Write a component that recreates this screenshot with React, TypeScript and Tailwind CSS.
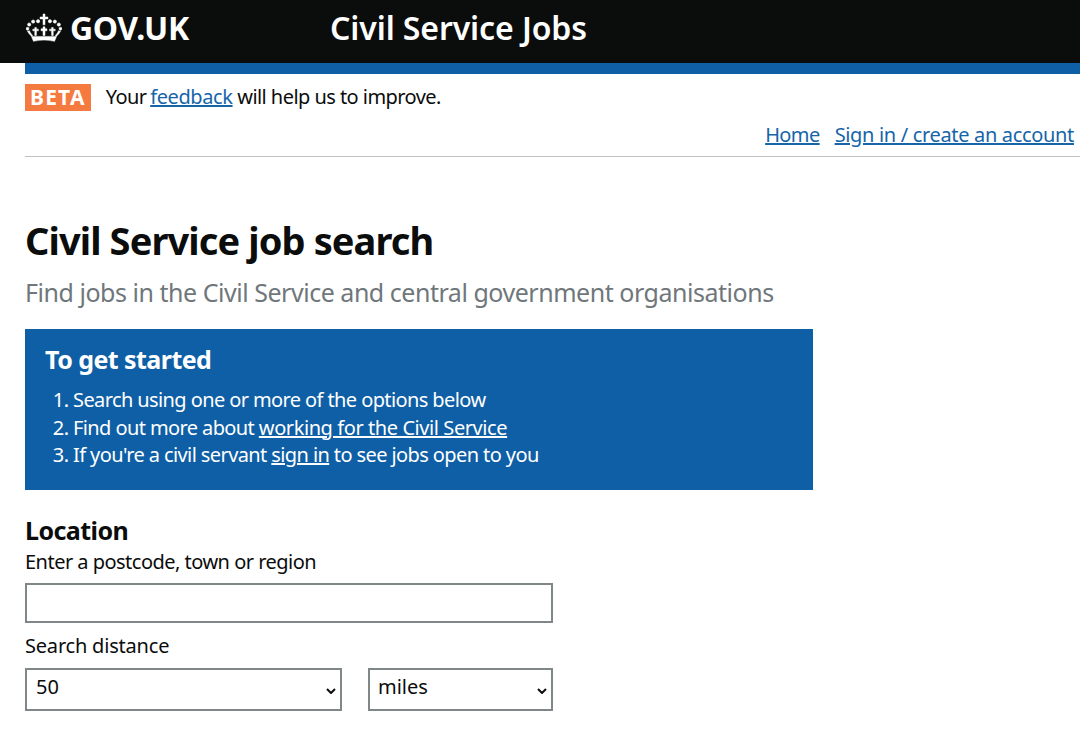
import React from "react"

function Crown() {
  return (
    <svg viewBox="18 12 108 88" className="w-[36px] h-[29px] fill-white stroke-white stroke-[1.5]">
      <path d="M69 15h6v9h9v6h-9v18h-6V30h-9v-6h9z" />
      <circle cx="54" cy="37" r="5" />
      <circle cx="90" cy="37" r="5" />
      <circle cx="39" cy="38" r="5" />
      <circle cx="105" cy="38" r="5" />
      <circle cx="27" cy="47" r="5" />
      <circle cx="117" cy="47" r="5" />
      <circle cx="22" cy="60" r="4.500" />
      <circle cx="122" cy="60" r="4.500" />
      {/* three small crosses */}
      <path d="M69 54h6v6h6v6h-6v14h-6V66h-6v-6h6z" />
      <path d="M44 56h5v5h6v5h-6v14h-5V66h-6v-5h6z" />
      <path d="M95 56h5v5h6v5h-6v14h-5V66h-6v-5h6z" />
      <path d="M22 67l6-1c2 6 5 10 9 13l-1 4c-6-4-11-9-14-16z" />
      <path d="M122 67l-6-1c-2 6-5 10-9 13l1 4c6-4 11-9 14-16z" />
      <path d="M34 83h76l-6 15c-22-5-42-5-64 0z" />
    </svg>
  )
}

function Chevron() {
  return (
    <svg viewBox="0 0 10 6" className="absolute right-[6px] top-[20px] w-[10px] h-[6px] pointer-events-none fill-none stroke-[#0b0c0c] stroke-2">
      <path d="M1 1l4 4 4-4" />
    </svg>
  )
}

export default function App() {
  return (
    <div className="font-['Noto_Sans',sans-serif] w-[1080px] h-[738px] overflow-hidden bg-white text-[#0b0c0c]">
      <header className="bg-[#0b0c0c] h-[63px] pl-[26px] pb-[8px] flex items-center text-white">
        <div className="flex items-center gap-[8px] w-[304px]">
          <Crown />
          <span className="text-[32px] font-bold leading-none tracking-[-0.4px]">GOV.UK</span>
        </div>
        <span className="text-[32px] font-semibold leading-none tracking-[-0.1px]">Civil Service Jobs</span>
      </header>
      <div className="pl-[25px]">
        <div className="h-[11px] bg-[#0f5fa6]" />
        <div className="flex items-center gap-[15px] h-[46px] text-[20px] tracking-[-0.55px]">
          <span className="bg-[#f57a40] text-white font-bold text-[21px] px-[5px] h-[27px] leading-[27px] tracking-[1.2px]">BETA</span>
          <span>
            Your <a className="text-[#1565a8] underline tracking-[-0.4px] ml-[-1px]">feedback</a> will help us to improve.
          </span>
        </div>
        <nav className="flex justify-end gap-[15px] pr-[6px] pb-[6px] h-[37px] items-center text-[20px] tracking-[-0.33px] text-[#1565a8] border-b border-[#bfc1c3]">
          <a className="underline tracking-[-0.6px]">Home</a>
          <a className="underline">Sign in / create an account</a>
        </nav>
        <h1 className="text-[38px] font-bold mt-[56px] leading-[55px] tracking-[-0.9px]">Civil Service job search</h1>
        <p className="text-[25px] text-[#6f777b] mt-[7px] leading-[34px] tracking-[-0.47px]">Find jobs in the Civil Service and central government organisations</p>
        <section className="mt-[20px] w-[788px] h-[161px] bg-[#0f5fa6] text-white px-[20px] pt-[13px]">
          <h2 className="text-[25px] font-bold leading-[34px] tracking-[-0.55px]">To get started</h2>
          <ol className="list-decimal pl-[28px] mt-[10px] text-[20px] leading-[27.5px] tracking-[-0.6px]">
            <li>Search using one or more of the options below</li>
            <li>Find out more about <a className="underline tracking-[-0.42px]">working for the Civil Service</a></li>
            <li>If you're a civil servant <a className="underline">sign in</a> to see jobs open to you</li>
          </ol>
        </section>
        <h3 className="text-[25px] font-bold mt-[23px] leading-[34px] tracking-[-0.55px]">Location</h3>
        <label className="block text-[20px] leading-[28px] mt-[1px] tracking-[-0.52px]">Enter a postcode, town or region</label>
        <input className="block mt-[7px] w-[528px] h-[40px] border-2 border-[#7f8789] bg-white" />
        <label className="block text-[20px] leading-[28px] mt-[9px] tracking-[-0.2px]">Search distance</label>
        <div className="flex gap-[26px] mt-[8px]">
          <div className="relative">
            <select className="appearance-none block w-[317px] h-[43px] border-2 border-[#7f8789] bg-white text-[20px] pl-[9px] pb-[5px]" defaultValue="50">
              <option>50</option>
            </select>
            <Chevron />
          </div>
          <div className="relative">
            <select className="appearance-none block w-[185px] h-[43px] border-2 border-[#7f8789] bg-white text-[20px] pl-[8px] pb-[5px]" defaultValue="miles">
              <option>miles</option>
            </select>
            <Chevron />
          </div>
        </div>
      </div>
    </div>
  )
}
